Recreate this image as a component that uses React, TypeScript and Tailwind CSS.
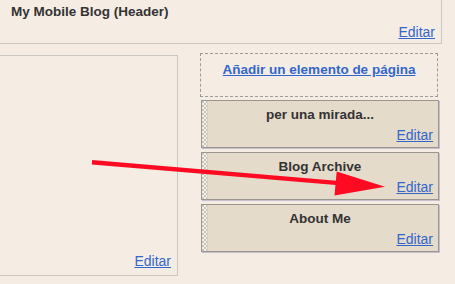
import React from "react";

function Editar() {
  return (
    <a href="#" className="text-[14px] leading-[16px] text-[#3366cc] underline underline-offset-[1px]">
      Editar
    </a>
  );
}

function Widget({ title }: { title: string }) {
  return (
    <div className="w-[238px] h-[48px] border border-[#9a968f] bg-[#e5dbca] shadow-[1px_1px_0_#c3c1cf] flex">
      <div className="w-[6px] h-full bg-[image:conic-gradient(#f6f3ee_25%,#c8c2b8_0_50%,#f6f3ee_0_75%,#c8c2b8_0)] bg-[length:4px_4px] border-r border-[#d8d0c2]" />
      <div className="flex-1 flex flex-col justify-between pt-[6px] pb-[5px]">
        <div className="text-center pr-[6px] text-[13.5px] leading-[16px] font-bold text-[#333]">{title}</div>
        <div className="text-right pr-[5px]">
          <Editar />
        </div>
      </div>
    </div>
  );
}

export default function App() {
  return (
    <div className="relative w-[455px] h-[284px] overflow-hidden bg-[#f5ede3] font-['Liberation_Sans',Arial,sans-serif]">
      <div className="w-[442px] h-[44px] border-r border-b border-[#cbc7c2] flex flex-col justify-between pt-[4px] pb-[4px] pl-[11px] pr-[6px]">
        <div className="text-[13.5px] leading-[16px] font-bold text-[#333]">My Mobile Blog (Header)</div>
        <div className="text-right">
          <Editar />
        </div>
      </div>
      <div className="flex">
        <div className="mt-[11px] w-[178px] h-[221px] border-t border-r border-b border-[#cbc7c2] flex flex-col justify-end items-end pr-[6px] pb-[6px]">
          <Editar />
        </div>
        <div className="ml-[22px] mt-[9px] flex flex-col">
          <div className="w-[238px] h-[44px] border border-dashed border-[#9a9a9a] text-center pt-[3px]">
            <a href="#" className="text-[13.5px] leading-[16px] font-bold text-[#3366cc] underline underline-offset-[1px]">
              Añadir un elemento de página
            </a>
          </div>
          <div className="ml-[1px] mt-[3px] flex flex-col gap-[4px]">
            <Widget title="per una mirada..." />
            <Widget title="Blog Archive" />
            <Widget title="About Me" />
          </div>
        </div>
      </div>
      <svg className="absolute left-0 top-0 pointer-events-none" width="455" height="284" viewBox="0 0 455 284">
        <line x1="92" y1="162.2" x2="345" y2="183.6" stroke="#fe0a22" strokeWidth="4.4" />
        <polygon points="336.7,171.5 385,186.7 334.5,195.5" fill="#fe0a22" />
      </svg>
    </div>
  );
}
